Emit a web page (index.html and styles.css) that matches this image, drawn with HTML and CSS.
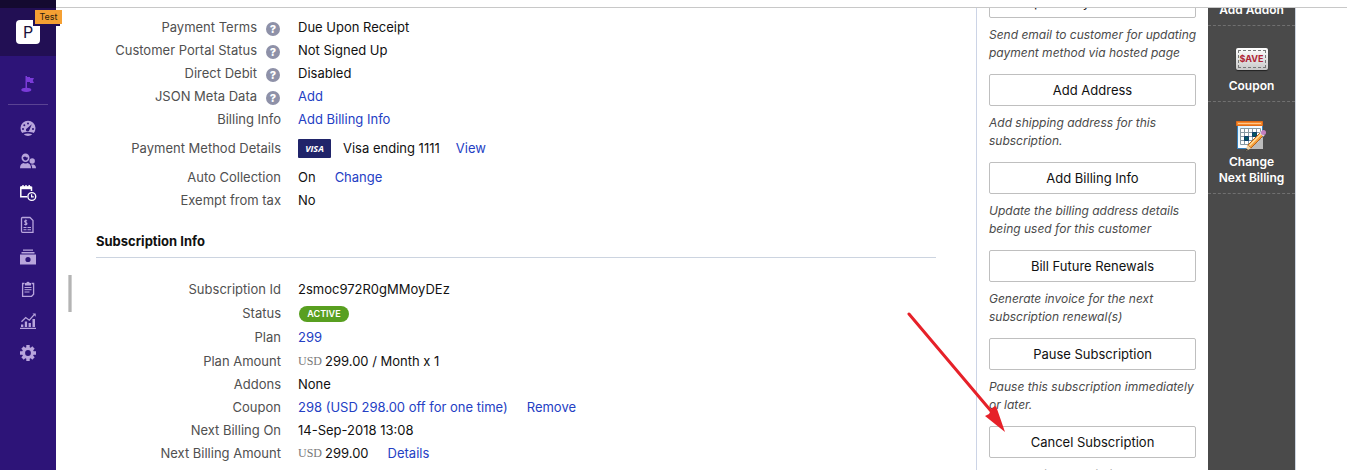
FILE: index.html
```html
<!DOCTYPE html>
<html lang="en">
<head>
<meta charset="utf-8">
<title>Subscription details</title>
<link rel="stylesheet" href="styles.css">
</head>
<body>
<div class="app">
  <nav class="sidebar" aria-label="Main">
    <div class="site">
      <a class="site-logo" href="#">P</a>
      <span class="site-tag">Test</span>
    </div>
    <a class="nav-item nav-flag" href="#" aria-label="Setup">
      <svg width="16" height="18" viewBox="0 0 16 18" fill="currentColor"><path d="M5.500 1h1.500v13.500H5.500z"/><path d="M7 2h3v1h4l-1.200 2.500L14 8h-4V7H7z"/><ellipse cx="6.300" cy="14.800" rx="5" ry="2.100"/></svg>
    </a>
    <ul class="nav-list">
      <li><a class="nav-item" href="#" aria-label="Dashboard"><svg width="18" height="18" viewBox="0 0 18 18"><path fill="currentColor" d="M3.200 13A7.500 7.500 0 1 1 14.800 13C12 11.600 6 11.600 3.200 13zM4.800 14.300c2.500-1 5.900-1 8.400 0-2.400 2.100-6 2.100-8.400 0z"/><g fill="#2d1478"><circle cx="4" cy="9" r="1"/><circle cx="5.300" cy="5.300" r="1"/><circle cx="9" cy="3.500" r="1"/><circle cx="14" cy="9" r="1"/><path d="M12.800 4.200 10.300 10.200a1.700 1.700 0 1 1-2.200-1.900z"/></g></svg></a></li>
      <li><a class="nav-item" href="#" aria-label="Customers"><svg width="18" height="18" viewBox="0 0 18 18" fill="currentColor"><path fill-rule="evenodd" d="M6.500 1.500a4 4.300 0 1 1 0 8.600 4 4.300 0 0 1 0-8.600zM4 5.300c.2 2 1.200 3.200 2.500 3.200S8.800 7.300 9 5.500C7.500 5.700 6.500 5 6 4.300 5.500 5 4.800 5.300 4 5.300z"/><path d="M1 16.200c0-3.200 1.500-4.800 3.800-5.200.9.700 2.500.7 3.400 0 2.300.4 3.800 2 3.800 5.200z"/><circle cx="13.200" cy="9" r="2.700"/><path d="M12 12.500h2.500c1.500.4 2.500 1.700 2.500 3.700h-3.800c0-1.500-.4-2.700-1.200-3.700z"/></svg></a></li>
      <li><a class="nav-item nav-current" href="#" aria-label="Subscriptions"><svg width="18" height="18" viewBox="0 0 18 18" fill="none" stroke="currentColor"><path stroke-width="1.500" d="M8 12.800H1.800V3.500h10.700v3.500"/><path stroke-width="3" d="M1.500 3.700h11"/><path stroke-width="1.400" d="M4 1v3M7 1v3M10.200 1v3"/><circle cx="12.800" cy="12.500" r="3.900" stroke-width="1.400"/><path stroke-width="1.200" d="M12.600 10.300v2.500h2.200"/></svg></a></li>
      <li><a class="nav-item" href="#" aria-label="Invoices"><svg width="18" height="18" viewBox="0 0 18 18" fill="none" stroke="currentColor"><path stroke-width="1.300" d="M3.500 1.500h7.500l3 3v11.800H3.500c-.8 0-1-.3-1-1V2.500c0-.7.300-1 1-1z"/><path stroke-width="1.100" d="M8 4.900c-.6-.6-2.400-.5-2.400.5S8 6.500 8 7.700s-2 1.200-2.700.4M6.800 3.600v5.800M4.500 11.500h3M8.500 11.500h3.500M4.500 13.700h3M8.500 13.700h3.500"/></svg></a></li>
      <li><a class="nav-item" href="#" aria-label="Transactions"><svg width="18" height="18" viewBox="0 0 18 18" fill="currentColor"><path d="M4 1.500h10v1.200H4zM2.500 4h13v1.400h-13z"/><path fill-rule="evenodd" d="M1 6.600h16V16.500H1zM9 8.900a2.600 2.600 0 1 0 0 5.200 2.600 2.600 0 0 0 0-5.200z"/></svg></a></li>
      <li><a class="nav-item" href="#" aria-label="Orders"><svg width="18" height="18" viewBox="0 0 18 18" fill="none" stroke="currentColor"><path stroke-width="1.300" d="M5.500 3.500H3.600v12.800h9l2-2V3.500h-2"/><path fill="currentColor" stroke="none" d="M6 3h1.300a1.800 1.800 0 0 1 3.400 0H12v2.500H6z"/><path d="M5.500 7.500h7M5.500 9.700h7M5.500 12h5"/></svg></a></li>
      <li><a class="nav-item" href="#" aria-label="Reports"><svg width="18" height="18" viewBox="0 0 18 18" fill="none" stroke="currentColor"><path stroke-width="1.300" d="M1 16.400h16M2.500 9.700l4.200-4.200 3.600 2.700 4.700-5.300"/><path fill="currentColor" stroke="none" d="M2 12.500h2.300v2.500H2zM5.800 9.500h2.300V15H5.800zM9.600 11h2.300v4H9.600zM13.500 7h2.500v8h-2.500zM13.500 1.500h3.200v3.200z"/></svg></a></li>
      <li><a class="nav-item" href="#" aria-label="Settings"><svg width="18" height="18" viewBox="0 0 18 18"><g stroke="currentColor" stroke-width="3.400"><path d="M9 1v16M1 9h16M3.500 3.500l11 11M14.500 3.500l-11 11"/></g><circle cx="9" cy="9" r="5.900" fill="currentColor"/><circle cx="9" cy="9" r="2.900" fill="#2d1478"/></svg></a></li>
    </ul>
  </nav>

  <div class="page">
    <main class="main">
      <div class="resizer"></div>
      <div class="details">
        <dl class="fields">
          <div class="row"><dt>Payment Terms <span class="help">?</span></dt><dd>Due Upon Receipt</dd></div>
          <div class="row"><dt>Customer Portal Status <span class="help">?</span></dt><dd>Not Signed Up</dd></div>
          <div class="row"><dt>Direct Debit <span class="help">?</span></dt><dd>Disabled</dd></div>
          <div class="row"><dt>JSON Meta Data <span class="help">?</span></dt><dd><a href="#">Add</a></dd></div>
          <div class="row"><dt>Billing Info</dt><dd><a href="#">Add Billing Info</a></dd></div>
          <div class="row row-card"><dt>Payment Method Details</dt><dd><span class="visa">VISA</span><span>Visa ending 1111</span><a class="near" href="#">View</a></dd></div>
          <div class="row"><dt>Auto Collection</dt><dd>On <a class="far" href="#">Change</a></dd></div>
          <div class="row"><dt>Exempt from tax</dt><dd>No</dd></div>
        </dl>
        <h2 class="section-title">Subscription Info</h2>
        <dl class="fields">
          <div class="row"><dt>Subscription Id</dt><dd>2smoc972R0gMMoyDEz</dd></div>
          <div class="row row-status"><dt>Status</dt><dd><span class="badge">ACTIVE</span></dd></div>
          <div class="row"><dt>Plan</dt><dd><a href="#">299</a></dd></div>
          <div class="row row-amount"><dt>Plan Amount</dt><dd><span class="currency">USD</span>299.00 / Month x 1</dd></div>
          <div class="row"><dt>Addons</dt><dd>None</dd></div>
          <div class="row"><dt>Coupon</dt><dd><a href="#">298 (USD 298.00 off for one time)</a><a class="far" href="#">Remove</a></dd></div>
          <div class="row"><dt>Next Billing On</dt><dd>14-Sep-2018 13:08</dd></div>
          <div class="row"><dt>Next Billing Amount</dt><dd><span class="currency">USD</span>299.00 <a class="far" href="#">Details</a></dd></div>
        </dl>
      </div>
    </main>

    <aside class="actions">
      <div class="action"><button type="button">Request Payment Method</button><p>Send email to customer for updating payment method via hosted page</p></div>
      <div class="action"><button type="button">Add Address</button><p>Add shipping address for this subscription.</p></div>
      <div class="action"><button type="button">Add Billing Info</button><p>Update the billing address details being used for this customer</p></div>
      <div class="action"><button type="button">Bill Future Renewals</button><p>Generate invoice for the next subscription renewal(s)</p></div>
      <div class="action"><button type="button">Pause Subscription</button><p>Pause this subscription immediately or later.</p></div>
      <div class="action"><button type="button">Cancel Subscription</button><p>Cancel this subscription</p></div>
    </aside>

    <aside class="tools">
      <a class="tool tool-first" href="#">Add Addon</a>
      <a class="tool" href="#">
        <span class="save">$AVE</span>
        Coupon
      </a>
      <a class="tool" href="#">
        <svg width="32" height="32" viewBox="0 0 32 32">
          <defs>
            <linearGradient id="sheet" x1="0" y1="0" x2="1" y2="1"><stop offset="0" stop-color="#d4efff"/><stop offset=".6" stop-color="#fff"/><stop offset="1" stop-color="#d8d8d8"/></linearGradient>
          </defs>
          <path fill="url(#sheet)" stroke="#3681bd" d="M1.500 5.500h25v23h-25z"/>
          <path fill="#f58a2c" stroke="#e36c17" d="M.5 1.500h26v4H.5z"/>
          <path stroke="#ffc58c" d="M2 3.500h23"/>
          <path fill="#fff" stroke="#8799a2" d="M4.500 8.500h20v16h-20zM8.500 8.500v16M12.500 8.500v16M16.500 8.500v16M20.500 8.500v16M4.500 12.500h20M4.500 16.500h20M4.500 20.500h20"/>
          <path fill="#07585f" stroke="#0a3d6c" d="M16.500 12.500h4v4h-4zM8.500 16.500h4v4h-4z"/>
          <path fill="#bcbcbc" d="M27 17v12H14z"/>
          <path fill="#f7a13c" stroke="#b86318" d="m11.800 25.200 13-13 3 3-13 13z"/>
          <path stroke="#ffe0a0" stroke-width="1.500" d="m13.500 25.500 12-12"/>
          <path fill="#f2d3a5" d="m11.500 25 3.500 3.500-5.500 2.500z"/>
          <path fill="#333" d="m10.500 28.500 1.500 1.300-3.500 1.700z"/>
          <path stroke="#d5d5e0" stroke-width="2" d="m24 12 4 4"/>
          <circle cx="27.500" cy="12.500" r="2.500" fill="#c47fc0"/>
        </svg>
        Change<br>Next Billing
      </a>
    </aside>
  </div>

  <svg class="arrow" width="100" height="122" viewBox="0 0 100 122" aria-hidden="true">
    <path d="M2 3 84 100" stroke="#e62129" stroke-width="3" stroke-linecap="round"/>
    <path d="M98 121 78 105l4-2 3-6 4-2z" fill="#e62129"/>
  </svg>
</div>
</body>
</html>
```
FILE: styles.css
```css
* { box-sizing: border-box; }

body {
  margin: 0;
  background: #fff;
  color: #111;
  font: 13px/23px Inter, "Liberation Sans", sans-serif;
}

a { color: #2440c4; text-decoration: none; }

.app {
  position: relative;
  display: flex;
  height: 100vh;
  overflow: hidden;
}

/* Sidebar */
.sidebar {
  flex: none;
  width: 56px;
  background: #2d1478;
  border-top: 8px solid #140a30;
}

.site {
  position: relative;
  height: 48px;
  padding: 12px 16px;
  background: #220f54;
}

.site-logo {
  display: block;
  width: 24px;
  height: 24px;
  border-radius: 4px;
  background: #fff;
  color: #17103a;
  font-size: 16px;
  line-height: 24px;
  text-align: center;
}

.site-tag {
  position: absolute;
  top: 2px;
  left: 35px;
  width: 27px;
  background: #f5a033;
  color: #2a1c10;
  font-size: 9px;
  line-height: 14px;
  text-align: center;
  box-shadow: -2px 2px 0 #220f54;
  clip-path: inset(0 0 -2px -2px);
}

.nav-item {
  display: flex;
  align-items: center;
  justify-content: center;
  height: 32px;
  color: #b8a5dc;
}

.nav-flag {
  height: 49px;
  margin: 0 8px 8px;
  padding-top: 8px;
  border-bottom: 1px solid #5a4393;
  color: #7a3bd8;
}

.nav-current { color: #fff; }

.nav-list {
  margin: 0;
  padding: 0;
  list-style: none;
}

/* Page */
.page {
  display: flex;
  flex: 1;
  min-width: 0;
  margin-top: 7px;
  padding-right: 51px;
  border-top: 1px solid #c8c8c8;
  overflow: hidden;
}

.main {
  display: flex;
  flex: 1;
  min-width: 0;
  padding: 0 40px 0 12px;
}

.resizer {
  flex: none;
  width: 4px;
  height: 37px;
  margin: 267px 24px 0 0;
  background: #b4b4b4;
  border: solid #cfcfcf;
  border-width: 0 1px;
}

.details {
  flex: 1;
  min-width: 0;
  padding-top: 8px;
}

.fields { margin: 0; }

.row {
  display: grid;
  grid-template-columns: 185px 1fr;
  align-items: center;
  column-gap: 17px;
  height: 23px;
  white-space: nowrap;
}

.row-card { height: 35px; }
.row-status { height: 25px; }
.row-amount { height: 24px; }

dt {
  display: flex;
  align-items: center;
  justify-content: flex-end;
  color: #505050;
}

dd {
  display: flex;
  align-items: center;
  margin: 0;
}

.help {
  width: 14px;
  height: 14px;
  margin: 2px 1px 0 9px;
  border-radius: 50%;
  background: #8e91a8;
  color: #fff;
  font-size: 11px;
  font-weight: 800;
  line-height: 14px;
  text-align: center;
}

.visa {
  width: 33px;
  height: 19px;
  margin-right: 12px;
  border-radius: 1px;
  background: #20246a;
  color: #fff;
  font: italic bold 9px/19px "Open Sans", sans-serif;
  text-align: center;
}

.near { margin-left: 16px; }
.far { margin-left: 19px; }

.section-title {
  margin: 18px 0 20px;
  padding-bottom: 4px;
  border-bottom: 1px solid #ccd4e0;
  font-size: 13px;
  font-weight: 700;
  line-height: 23px;
}

.badge {
  width: 50px;
  margin-left: 1px;
  border-radius: 8px;
  background: #589f20;
  color: #fff;
  font-size: 9px;
  font-weight: 600;
  line-height: 16px;
  text-align: center;
}

.currency {
  margin-right: 3px;
  color: #777;
  font-family: "Liberation Serif", serif;
  font-size: 12px;
}

/* Actions */
.actions {
  flex: none;
  width: 232px;
  padding: 0 12px;
  border-left: 1px solid #ccd4e6;
}

.action:first-child { margin-top: -22px; }

.action button {
  display: block;
  width: 100%;
  height: 32px;
  border: 1px solid #bfbfbf;
  border-radius: 2px;
  background: #fff;
  color: #111;
  font: inherit;
}

.action p {
  margin: 8px -8px 12px 0;
  color: #4a4a4a;
  font-size: 12px;
  font-style: italic;
  line-height: 18px;
}

/* Tools */
.tools {
  flex: none;
  width: 88px;
  background: #4a4a4a;
  border-right: 1px solid #ccd4e0;
}

.tool {
  display: block;
  padding: 18px 0 7px;
  border-bottom: 1px dashed #707070;
  color: #fff;
  font-size: 12px;
  font-weight: 600;
  line-height: 16px;
  text-align: center;
}

.tool-first {
  margin-top: -24px;
}

.tool svg {
  display: block;
  margin: 0 auto 2px;
}

.save {
  display: block;
  width: 32px;
  height: 22px;
  margin: 4px auto 8px;
  padding: 2px;
  border-radius: 2px;
  background: linear-gradient(#fff, #c8c8c8);
  box-shadow: 0 1px 1px #222;
  color: #b02434;
  font-size: 9px;
  font-weight: 700;
  line-height: 18px;
  outline: 1px dashed #777;
  outline-offset: -3px;
}

.arrow {
  position: absolute;
  top: 311px;
  left: 907px;
  fill: none;
  pointer-events: none;
}
```
